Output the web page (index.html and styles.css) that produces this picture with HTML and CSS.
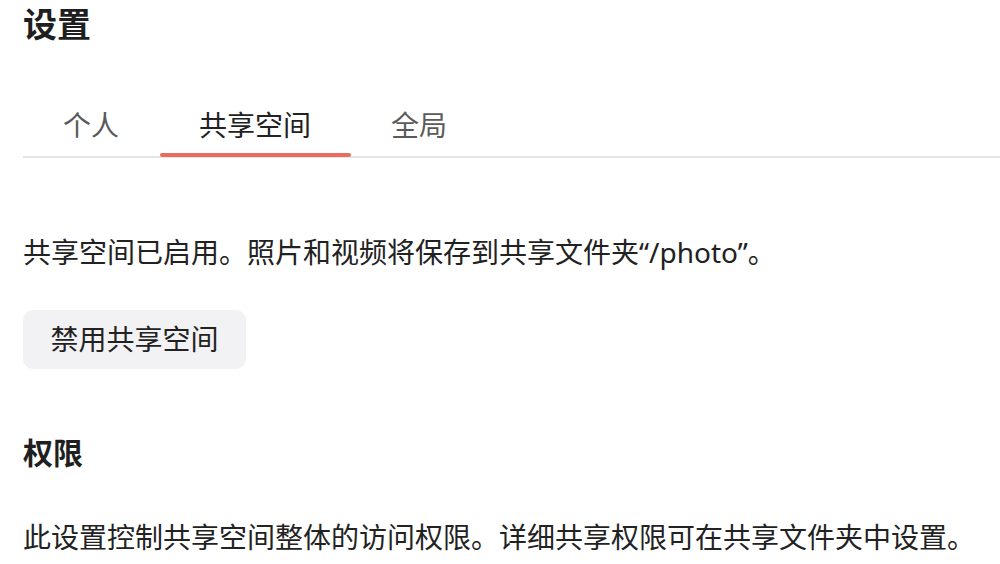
FILE: index.html
```html
<!DOCTYPE html>
<html lang="zh-CN">
<head>
<meta charset="utf-8">
<title>设置</title>
<link rel="stylesheet" href="styles.css">
</head>
<body>
<div class="page">
  <h1 class="title">设置</h1>
  <div class="tabs">
    <div class="tab">个人</div>
    <div class="tab active">共享空间</div>
    <div class="tab">全局</div>
  </div>
  <p class="text status">共享空间已启用。照片和视频将保存到共享文件夹“/photo”。</p>
  <button class="btn">禁用共享空间</button>
  <h2 class="section">权限</h2>
  <p class="text desc">此设置控制共享空间整体的访问权限。详细共享权限可在共享文件夹中设置。</p>
</div>
</body>
</html>
```

FILE: styles.css
```css
html, body {
  margin: 0;
  padding: 0;
  background: #ffffff;
}
body {
  font-family: "Noto Sans", "Noto Sans CJK SC", sans-serif;
  color: #222222;
  overflow: hidden;
}
.page {
  padding-left: 23px;
  display: flex;
  flex-direction: column;
  align-items: flex-start;
}
.title {
  margin: 0;
  font-size: 34px;
  line-height: 48px;
  font-weight: 700;
  color: #1f1f1f;
}
.tabs {
  margin-top: 57px;
  align-self: stretch;
  display: flex;
  border-bottom: 2px solid #e6e6e6;
}
.tab {
  position: relative;
  padding: 0 40px 11px 40px;
  font-size: 28px;
  line-height: 40px;
  color: #5a5a5a;
}
.tab.active {
  color: #222222;
}
.tab.active::after {
  content: "";
  position: absolute;
  left: 1px;
  right: 0;
  bottom: -1px;
  height: 4px;
  border-radius: 2px;
  background: #ea6c60;
}
.text {
  margin: 0;
  font-size: 28px;
  line-height: 40px;
  color: #222222;
}
.status {
  margin-top: 74px;
}
.btn {
  margin-top: 38px;
  font-family: inherit;
  font-size: 28px;
  line-height: 39px;
  color: #222222;
  background: #f2f2f4;
  border: none;
  border-radius: 10px;
  padding: 10px 27.5px;
}
.section {
  margin: 64px 0 0 0;
  font-size: 30px;
  line-height: 40px;
  font-weight: 700;
  color: #1f1f1f;
}
.desc {
  margin-top: 44px;
}
```
